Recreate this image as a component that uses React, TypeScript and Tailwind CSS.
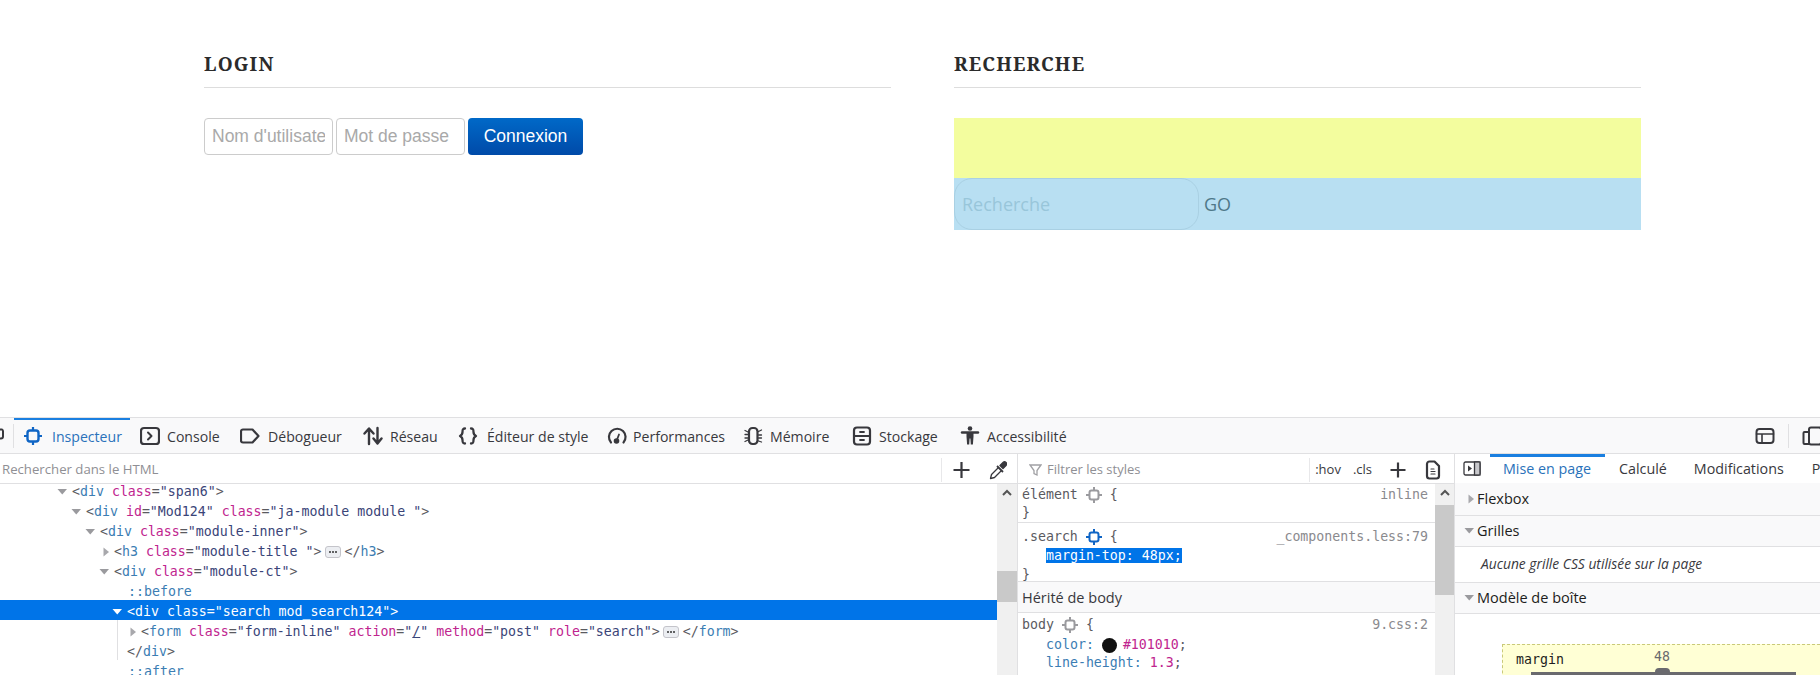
import React from "react";

const ui = "font-['Open_Sans','Noto_Sans',sans-serif]";
const mono = "font-['DejaVu_Sans_Mono',monospace]";

function Ic({ children, w = 20 }: { children: React.ReactNode; w?: number }) {
  return (
    <svg width={w} height={20} viewBox={`0 0 ${w} 20`} fill="none" stroke="currentColor" strokeWidth="2" strokeLinecap="round" strokeLinejoin="round" className="shrink-0">
      {children}
    </svg>
  );
}

const Target = () => (
  <>
    <rect x="4.500" y="4.500" width="11" height="11" rx="2.500" strokeWidth="2.400" />
    <path d="M10 1v3M10 16v3M1 10h3M16 10h3" strokeWidth="2.200" strokeLinecap="butt" />
  </>
);

const SmallTarget = () => (
  <svg width="16" height="16" viewBox="0 0 16 16" fill="none" stroke="currentColor" className="shrink-0">
    <rect x="3.500" y="3.500" width="9" height="9" rx="2" strokeWidth="2" />
    <path d="M8 0v3M8 13v3M0 8h3M13 8h3" strokeWidth="2" />
  </svg>
);

const tabs: { label: string; w: string; pl: string; gap: string; active?: boolean; icon: React.ReactNode }[] = [
  { label: "Inspecteur", w: "w-[116px]", pl: "pl-[9px]", gap: "gap-[9px]", active: true, icon: <Target /> },
  { label: "Console", w: "w-[100px]", pl: "pl-[10px]", gap: "gap-[7px]", icon: <><rect x="1" y="2" width="18" height="16" rx="3" strokeWidth="2.200" /><path d="M8 6.500l3.500 3.500L8 13.500" /></> },
  { label: "Débogueur", w: "w-[123px]", pl: "pl-[10px]", gap: "gap-[8px]", icon: <path d="M3 3.500h9.500l6 6.500-6 6.500H3a2 2 0 0 1-2-2v-9a2 2 0 0 1 2-2z" strokeWidth="2.200" /> },
  { label: "Réseau", w: "w-[95px]", pl: "pl-[10px]", gap: "gap-[7px]", icon: <><path d="M6 18V3M1.500 7.500L6 2.500l4.500 5" strokeWidth="2.400" /><path d="M14.500 2v15M10.500 12.500l4 5 4-5" strokeWidth="2.400" /></> },
  { label: "Éditeur de style", w: "w-[149px]", pl: "pl-[10px]", gap: "gap-[9px]", icon: <><path d="M7 2.500c-2.500 0-2.500 1.500-2.500 3.500s-.5 3-2.500 4c2 1 2.500 2 2.500 4s0 3.500 2.500 3.500" strokeWidth="2.300" /><path d="M13 2.500c2.500 0 2.500 1.500 2.500 3.500s.5 3 2.500 4c-2 1-2.500 2-2.500 4s0 3.500-2.500 3.500" strokeWidth="2.300" /></> },
  { label: "Performances", w: "w-[136px]", pl: "pl-[10px]", gap: "gap-[6px]", icon: <><path d="M4 16.500A8.300 8.300 0 1 1 16.500 16.500" strokeWidth="2.200" /><path d="M9.500 15l2.500-6.500" strokeWidth="1.800" /><circle cx="9.500" cy="15" r="2.800" fill="currentColor" stroke="none" /></> },
  { label: "Mémoire", w: "w-[109px]", pl: "pl-[10px]", gap: "gap-[7px]", icon: <><rect x="6" y="2" width="8.500" height="16" rx="3.500" strokeWidth="2.200" /><path d="M2 4.500l3 1.500M2 8.500h3M2 12h3M2 15.500l3-1.500M15.500 5.500l3-1.500M15.500 9h3M15.500 12h3M15.500 15l3 1" strokeWidth="1.300" /></> },
  { label: "Stockage", w: "w-[108px]", pl: "pl-[10px]", gap: "gap-[7px]", icon: <><rect x="2" y="1.500" width="16" height="17" rx="3" strokeWidth="2.200" /><path d="M2 10h16M8 6h4M8 14h4" strokeWidth="1.800" /></> },
  { label: "Accessibilité", w: "w-[130px]", pl: "pl-[10px]", gap: "gap-[7px]", icon: <><circle cx="10" cy="2.500" r="2.300" fill="currentColor" stroke="none" /><path d="M2 6.500h16" strokeWidth="2.400" /><path d="M6.500 7h7v3.500l-.6 8h-2.100l-.4-6h-.8l-.4 6H7.100l-.6-8z" fill="currentColor" stroke="none" /></> },
];

const N = ({ c, sel }: { c: string; sel?: boolean }) => <span className={sel ? "text-white" : "text-[#3b7db3]"}>{c}</span>;
const A = ({ c, sel }: { c: string; sel?: boolean }) => <span className={sel ? "text-white" : "text-[#c0248e]"}>{c}</span>;
const V = ({ c, sel }: { c: string; sel?: boolean }) => <span className={sel ? "text-white" : "text-[#3a4478]"}>{c}</span>;
const P = ({ c, sel }: { c: string; sel?: boolean }) => <span className={sel ? "text-white" : "text-[#5a5a5f]"}>{c}</span>;

const Down = ({ sel }: { sel?: boolean }) => (
  <svg width="15" height="20" viewBox="0 0 15 20" className="shrink-0">
    <path d="M0.500 7h9.500l-4.750 5.500z" fill={sel ? "#ffffff" : "#9a9a9e"} />
  </svg>
);
const Right = () => (
  <svg width="15" height="20" viewBox="0 0 15 20" className="shrink-0">
    <path d="M4.500 5.500v9l5.500-4.500z" fill="#a8a8ac" />
  </svg>
);

const Dots = () => (
  <span className="mx-[3.500px] inline-flex h-[12px] w-[16px] shrink-0 items-center justify-center gap-[1px] rounded-[3px] border border-[#c4c4ca] bg-[#eceef2]">
    <span className="h-[2px] w-[2px] rounded-full bg-[#333]" />
    <span className="h-[2px] w-[2px] rounded-full bg-[#333]" />
    <span className="h-[2px] w-[2px] rounded-full bg-[#333]" />
  </span>
);

function Row({ pl, children, sel }: { pl: string; children: React.ReactNode; sel?: boolean }) {
  return <div className={`flex h-5 items-center whitespace-pre pt-[4px] ${pl} ${sel ? "bg-[#0074e8]" : ""}`}>{children}</div>;
}

function SectionHead({ label, open }: { label: string; open: boolean }) {
  return (
    <div className="flex items-center border-b border-[#e0e0e2] bg-[#f9f9fa] pl-[9px] text-[#1d1d20]">
      <span className="w-[13px] shrink-0">{open ? <Down /> : <Right />}</span>
      <span>{label}</span>
    </div>
  );
}

const titleClass = "h-[40px] border-b border-[#dddddd] font-['Noto_Serif','DejaVu_Serif','Liberation_Serif',serif] text-[19px] leading-[32px] font-bold tracking-[1.200px] text-[#2b2b2b]";

export default function App() {
  return (
    <div className={`flex h-[675px] w-[1820px] flex-col overflow-hidden bg-white ${ui}`}>
      <div className="h-[417px] shrink-0 px-[204px]">
        <div className="grid w-[1437px] grid-cols-[687px_687px] gap-x-[63px] pt-[48px]">
          <section>
            <h3 className={titleClass}>LOGIN</h3>
            <form className="mt-[30px] flex gap-[3px] font-['Liberation_Sans',sans-serif] text-[17.500px]">
              <input placeholder="Nom d'utilisateur" className="h-[37px] w-[129px] rounded-[4px] border border-[#cccccc] bg-white px-[7px] outline-none placeholder:text-[#a9a9a9]" />
              <input placeholder="Mot de passe" className="h-[37px] w-[129px] rounded-[4px] border border-[#cccccc] bg-white px-[7px] outline-none placeholder:text-[#a9a9a9]" />
              <button type="button" className="h-[37px] w-[115px] rounded-[4px] bg-gradient-to-b from-[#0069c8] to-[#004aa8] text-white">Connexion</button>
            </form>
          </section>
          <section>
            <h3 className={titleClass}>RECHERCHE</h3>
            <div className="mt-[30px] h-[60px] bg-[#f3fd9e]" />
            <div className="flex h-[52px] items-center bg-[#b8dff2] text-[18px]">
              <input placeholder="Recherche" className="h-[52px] w-[245px] rounded-[18px] border border-[#a9d0e3] bg-transparent px-[7px] outline-none placeholder:text-[#98c6da]" />
              <span className="ml-[5px] text-[#4f7889]">GO</span>
            </div>
          </section>
        </div>
      </div>

      <div className="flex h-[37px] shrink-0 items-center border-t border-b border-[#e0e0e2] bg-[#f9f9fa] text-[14px] text-[#38383d]">
        <div className="flex h-full w-[14px] shrink-0 items-center overflow-hidden">
          <svg width="13" height="20" viewBox="0 0 13 20" fill="none" stroke="#38383d" strokeWidth="2" className="shrink-0"><path d="M-3 3.500h5a2 2 0 0 1 1 2v5a2 2 0 0 1-2 2h-3l-1 3" /></svg>
          <div className="h-[24px] border-l border-[#e0e0e2]" />
        </div>
        {tabs.map((t) => (
          <div key={t.label} className={`flex h-full shrink-0 items-center ${t.w} ${t.pl} ${t.gap} ${t.active ? "border-t-2 border-[#1a7fe0] pb-[2px] text-[#2a72ba]" : ""}`}>
            <span className={t.active ? "text-[#0f65c5]" : ""}><Ic>{t.icon}</Ic></span>
            <span className="pt-[2px] text-[14.100px]">{t.label}</span>
          </div>
        ))}
        <div className="ml-auto flex h-full items-center">
          <Ic><rect x="1.500" y="3" width="17" height="14" rx="3" /><path d="M1.500 8h17M7 8v9" strokeWidth="1.600" /></Ic>
          <div className="mx-[13px] h-[24px] border-l border-[#e0e0e2]" />
          <div className="w-[18px] overflow-hidden"><Ic><rect x="7" y="1.500" width="12" height="17" rx="2" /><path d="M7 6H2.500a1 1 0 0 0-1 1v10a1 1 0 0 0 1 1H7" /></Ic></div>
        </div>
      </div>

      <div className="flex min-h-0 flex-1">
        <div className="flex w-[1018px] shrink-0 flex-col border-r border-[#e0e0e2]">
          <div className="flex h-[30px] shrink-0 items-center border-b border-[#e0e0e2] bg-white pt-[2px] pl-[2px] text-[13.200px] text-[#8f8f94]">
            <span>Rechercher dans le HTML</span>
            <div className="ml-auto flex h-[24px] items-center border-l border-[#e8e8ea] pr-[10px] pl-[11px] text-[#38383d]">
              <Ic w={17}><path d="M8.500 2v16M.5 10h16" strokeWidth="2.200" strokeLinecap="butt" /></Ic>
              <span className="ml-[19px]">
                <svg width="18" height="20" viewBox="0 0 18 20" fill="none" stroke="currentColor" strokeWidth="1.300" strokeLinejoin="round" className="shrink-0">
                  <path d="M9.500 7.500L2.500 14.500 1.500 18.500l4-1 7-7" />
                  <path d="M8 6l6 6" strokeWidth="1.800" />
                  <path d="M11 5.500l3-3a2 2 0 0 1 3 3l-3 3z" fill="currentColor" />
                </svg>
              </span>
            </div>
          </div>
          <div className={`flex min-h-0 flex-1 ${mono} text-[13.250px]`}>
            <div className="relative -mt-[4px] min-w-0 flex-1 overflow-hidden">
              <Row pl="pl-[57px]"><Down /><P c="<" /><N c="div" /><P c=" " /><A c="class" /><P c="=" /><V c='"span6"' /><P c=">" /></Row>
              <Row pl="pl-[71px]"><Down /><P c="<" /><N c="div" /><P c=" " /><A c="id" /><P c="=" /><V c='"Mod124"' /><P c=" " /><A c="class" /><P c="=" /><V c='"ja-module module "' /><P c=">" /></Row>
              <Row pl="pl-[85px]"><Down /><P c="<" /><N c="div" /><P c=" " /><A c="class" /><P c="=" /><V c='"module-inner"' /><P c=">" /></Row>
              <Row pl="pl-[99px]"><Right /><P c="<" /><N c="h3" /><P c=" " /><A c="class" /><P c="=" /><V c='"module-title "' /><P c=">" /><Dots /><P c="</" /><N c="h3" /><P c=">" /></Row>
              <Row pl="pl-[99px]"><Down /><P c="<" /><N c="div" /><P c=" " /><A c="class" /><P c="=" /><V c='"module-ct"' /><P c=">" /></Row>
              <Row pl="pl-[128px]"><N c="::before" /></Row>
              <Row pl="pl-[112px]" sel><Down sel /><P sel c='<div class="search mod_search124">' /></Row>
              <Row pl="pl-[126px]"><Right /><P c="<" /><N c="form" /><P c=" " /><A c="class" /><P c="=" /><V c='"form-inline"' /><P c=" " /><A c="action" /><P c="=" /><V c='"' /><span className="text-[#3a4478] underline">/</span><V c='"' /><P c=" " /><A c="method" /><P c="=" /><V c='"post"' /><P c=" " /><A c="role" /><P c="=" /><V c='"search"' /><P c=">" /><Dots /><P c="</" /><N c="form" /><P c=">" /></Row>
              <Row pl="pl-[127px]"><P c="</" /><N c="div" /><P c=">" /></Row>
              <Row pl="pl-[128px]"><N c="::after" /></Row>
              <div className="absolute top-[140px] left-[117px] h-[40px] border-l border-[#e0e0e2]" />
            </div>
            <div className="flex w-[20px] shrink-0 flex-col bg-[#f0f0f0]">
              <div className="flex h-[87px] shrink-0 items-start justify-center pt-[4px] text-[#555]">
                <svg width="12" height="10" viewBox="0 0 12 10" fill="none" stroke="currentColor" strokeWidth="2"><path d="M2 7l4-4 4 4" /></svg>
              </div>
              <div className="h-[31px] bg-[#c9c9c9]" />
            </div>
          </div>
        </div>

        <div className="flex w-[437px] shrink-0 flex-col border-r border-[#e0e0e2]">
          <div className="flex h-[30px] shrink-0 items-center border-b border-[#e0e0e2] pt-[2px] pl-[11px] text-[13px] text-[#8f8f94]">
            <svg width="13" height="14" viewBox="0 0 13 14" fill="none" stroke="#a0a0a4" strokeWidth="1.300" className="mr-[5px] shrink-0"><path d="M1 2h11L8 7.500V12l-3-1.500v-3z" /></svg>
            <span>Filtrer les styles</span>
            <div className="ml-auto flex h-[24px] items-center border-l border-[#e8e8ea] pl-[5px] text-[13px] text-[#38383d]">
              <span>:hov</span>
              <span className="ml-[12px]">.cls</span>
              <span className="ml-[18px]"><Ic w={16}><path d="M8 2.500v15M.5 10h15" strokeWidth="2.200" strokeLinecap="butt" /></Ic></span>
              <span className="mr-[13px] ml-[19px]"><Ic w={16}><path d="M2 4a2.500 2.500 0 0 1 2.500-2.500H9.500L14 6v10a2.500 2.500 0 0 1-2.500 2.500h-7A2.500 2.500 0 0 1 2 16z" strokeWidth="2.200" /><path d="M6 9h3M6 11.500h4M6 14h4" strokeWidth="1.200" /></Ic></span>
            </div>
          </div>
          <div className={`flex min-h-0 flex-1 ${mono} text-[13.250px] text-[#5a5a5f]`}>
            <div className="min-w-0 flex-1 overflow-hidden">
              <div className="h-[39px] border-b border-[#e0e0e2] pt-[2px] pr-[7px] pl-[4px] leading-[18px]">
                <div className="flex items-center"><span>élément</span><span className="mx-[8px] text-[#9a9a9e]"><SmallTarget /></span><span>{"{"}</span><span className="ml-auto text-[#8a8a8e]">inline</span></div>
                <div>{"}"}</div>
              </div>
              <div className="h-[59px] border-b border-[#e0e0e2] pt-[4px] pr-[7px] pl-[4px] leading-[19px]">
                <div className="flex items-center"><span>.search</span><span className="mx-[8px] text-[#0f65c5]"><SmallTarget /></span><span>{"{"}</span><span className="ml-auto text-[#8a8a8e]">_components.less:79</span></div>
                <div className="pl-[24px]"><span className="bg-[#0074e8] text-white">margin-top: 48px;</span></div>
                <div>{"}"}</div>
              </div>
              <div className={`flex h-[31px] items-center border-b border-[#e0e0e2] bg-[#f9f9fa] pt-[2px] pl-[4px] ${ui} text-[14.500px] text-[#38383d]`}>Hérité de body</div>
              <div className="pt-[3px] pr-[7px] pl-[4px] leading-[18px]">
                <div className="flex items-center"><span>body</span><span className="mx-[8px] text-[#9a9a9e]"><SmallTarget /></span><span>{"{"}</span><span className="ml-auto text-[#8a8a8e]">9.css:2</span></div>
                <div className="mt-[2px] flex items-center pl-[24px]"><span className="text-[#3b7db3]">color:</span><span className="mr-[6px] ml-[8px] h-[15px] w-[15px] rounded-full bg-[#101010]" /><span className="text-[#c0248e]">#101010</span><span>;</span></div>
                <div className="pl-[24px]"><span className="text-[#3b7db3]">line-height:</span> <span className="text-[#c0248e]">1.3</span><span>;</span></div>
              </div>
            </div>
            <div className="flex w-[19px] shrink-0 flex-col bg-[#f0f0f0]">
              <div className="flex h-[21px] shrink-0 items-start justify-center pt-[4px] text-[#555]">
                <svg width="12" height="10" viewBox="0 0 12 10" fill="none" stroke="currentColor" strokeWidth="2"><path d="M2 7l4-4 4 4" /></svg>
              </div>
              <div className="h-[90px] bg-[#c9c9c9]" />
            </div>
          </div>
        </div>

        <div className="flex min-w-0 flex-1 flex-col overflow-hidden">
          <div className="flex h-[30px] shrink-0 items-stretch border-b border-[#e0e0e2] text-[14.300px] text-[#38383d]">
            <div className="flex w-[35px] shrink-0 items-center pl-[8px]">
              <svg width="18" height="15" viewBox="0 0 18 15" fill="none" stroke="#38383d" strokeWidth="1.300"><rect x="1" y="1" width="16" height="13" rx="1.500" /><rect x="11.500" y="1" width="5.500" height="13" fill="#c8c8cc" /><path d="M5 4.500v6l4-3z" fill="#38383d" stroke="none" /></svg>
            </div>
            <div className="flex w-[115px] shrink-0 items-center border-t-[3px] border-[#1a7fe0] pb-[2px] pl-[13px] text-[#2a72ba]">Mise en page</div>
            <div className="ml-[14px] flex shrink-0 items-center pt-[1px]">Calculé</div>
            <div className="ml-[27px] flex shrink-0 items-center pt-[1px]">Modifications</div>
            <div className="ml-[28px] flex shrink-0 items-center pt-[1px]">Polices</div>
          </div>
          <div className="text-[14.500px]">
            <div className="-mt-[1px] leading-[32px]"><SectionHead label="Flexbox" open={false} /></div>
            <div className="leading-[30px]"><SectionHead label="Grilles" open /></div>
            <div className="flex h-[36px] items-center border-b border-[#e0e0e2] pl-[26px] text-[13.800px] text-[#38383d] italic">Aucune grille CSS utilisée sur la page</div>
            <div className="leading-[30px]"><SectionHead label="Modèle de boîte" open /></div>
            <div className={`relative mt-[30px] ml-[47px] h-[40px] border-t border-l border-dashed border-[#c9c97a] bg-[#ffffd5] ${mono} text-[13.250px] text-[#1d1d20]`}>
              <span className="absolute top-[6px] left-[13px] leading-[18px]">margin</span>
              <span className="absolute top-[3px] left-[151px] leading-[18px] text-[#6a6a6e]">48</span>
              <div className="absolute top-[23px] left-[152px] z-10 h-[8px] w-[15px] rounded-t-[4px] bg-[#6a6a6e]" />
              <div className="absolute top-[27px] left-[28px] h-[20px] w-[265px] bg-[#6a6a6e]" />
            </div>
          </div>
        </div>
      </div>
    </div>
  );
}
